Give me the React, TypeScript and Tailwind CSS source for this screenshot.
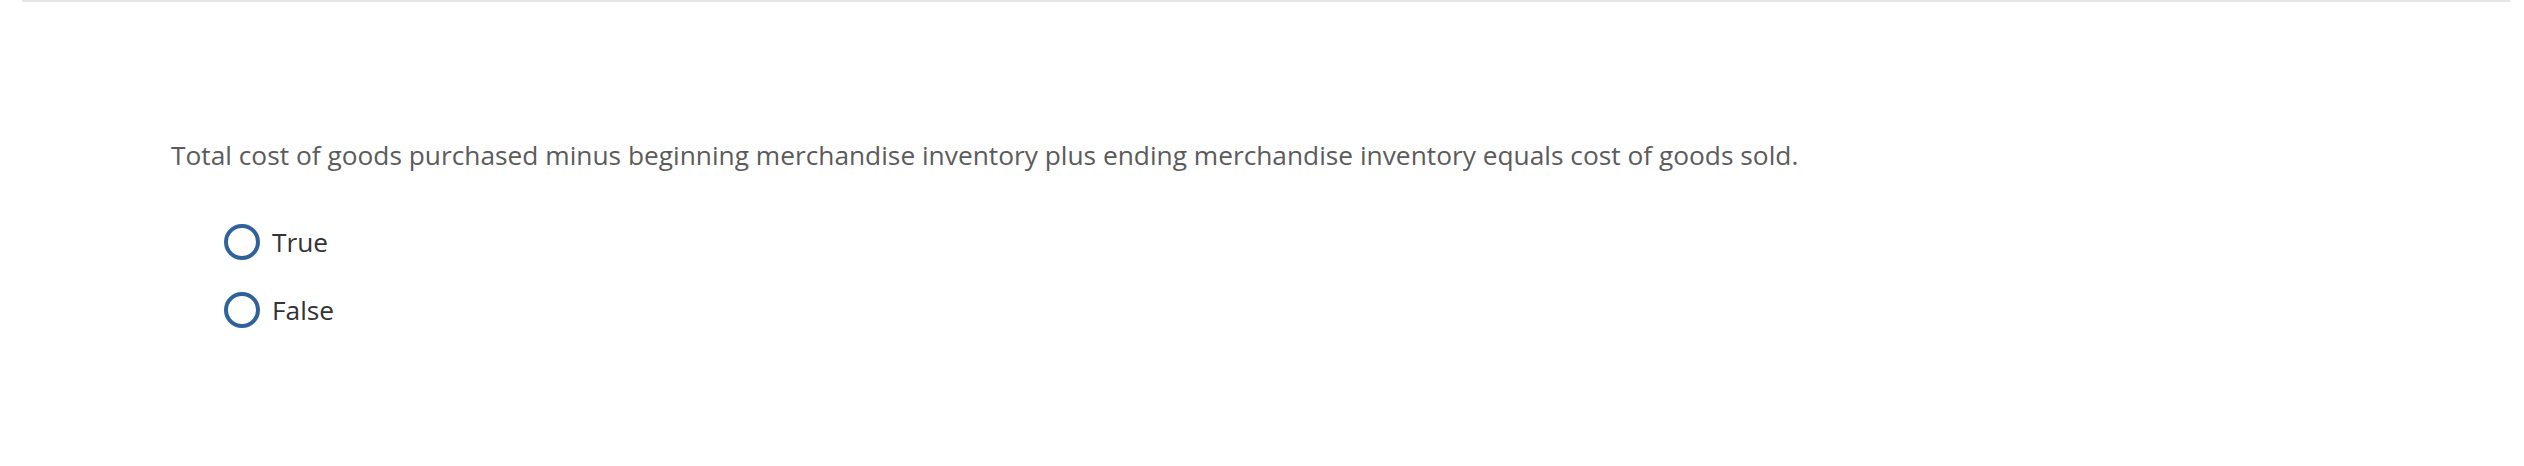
const options = ["True", "False"]

export default function App() {
  return (
    <div className="w-[2524px] h-[466px] bg-white" style={{ fontFamily: "'Open Sans', Lato, sans-serif" }}>
      <div className="mx-[22px] w-[2488px] h-[2px] bg-[#e6e6e6]"></div>

      <div className="pl-[171px] pt-[135px]">
        <p className="text-[26.3px] leading-[36px] text-[#5b5b5b]">
          Total cost of goods purchased minus beginning merchandise inventory plus ending merchandise inventory equals cost of goods sold.
        </p>

        <div className="mt-[51px] ml-[53px] flex flex-col gap-[32px]">
          {options.map((opt) => (
            <label key={opt} className="flex items-center gap-[12px] h-[36px]">
              <span className="w-[36px] h-[36px] rounded-full border-[4px] border-[#2f619b] bg-white"></span>
              <span className="text-[26.3px] leading-[36px] text-[#333333]">{opt}</span>
            </label>
          ))}
        </div>
      </div>
    </div>
  )
}
